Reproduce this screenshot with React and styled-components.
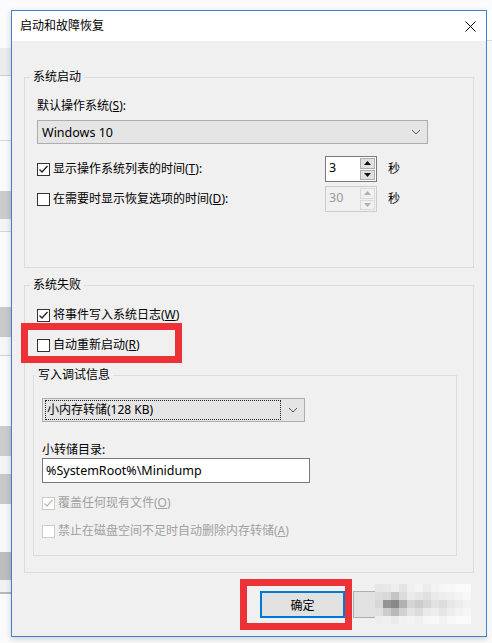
import React from "react";
import styled, { createGlobalStyle } from "styled-components";

const GlobalStyle = createGlobalStyle`
  html, body {
    margin: 0;
    padding: 0;
    background: #fff;
  }
  body {
    font-family: "Noto Sans", "Noto Sans CJK SC", sans-serif;
    font-size: 12px;
    color: #000;
  }
`;

// strips of the window that sits behind the dialog
const leftStrip = [
    { h: 38, c: "#fbfbfb" },
    { h: 27, c: "#ececec" },
    { h: 1, c: "#cfcfcf" },
    { h: 64, c: "#f9f9f9" },
    { h: 1, c: "#d6d6d6" },
    { h: 50, c: "#fafafa" },
    { h: 28, c: "#cbcbcb" },
    { h: 12, c: "#f4f4f4" },
    { h: 1, c: "#d4d4d4" },
    { h: 75, c: "#fafafa" },
    { h: 30, c: "#c9c9c9" },
    { h: 18, c: "#f6f6f6" },
    { h: 1, c: "#d0d0d0" },
    { h: 70, c: "#fafafa" },
    { h: 30, c: "#cccccc" },
    { h: 18, c: "#f4f4f4" },
    { h: 30, c: "#c8c8c8" },
    { h: 48, c: "#f8f8f8" },
    { h: 28, c: "#bdbdbd" },
    { h: 12, c: "#f2f2f2" },
    { h: 2, c: "#b8b8b8" },
    { h: 59, c: "#fafafa" },
];

const mosaic = [
    ["e6", "e8", "ee", "e4", "f0", "f4", "ec", "f2", "f6", "f8", "fa", "fb"],
    ["dc", "d8", "c4", "dc", "ea", "e6", "e0", "ea", "ee", "f0", "f4", "f8"],
    ["d6", "94", "88", "b2", "d4", "cc", "d6", "e2", "dc", "e8", "ec", "f2"],
    ["e0", "cc", "b8", "d2", "e4", "dc", "ea", "ee", "e6", "ee", "f2", "f6"],
    ["ee", "f0", "ea", "f2", "f4", "f0", "f6", "f8", "f2", "f8", "f9", "fa"],
];

function CheckBox({ checked, disabled, children }) {
    return (
        <CheckRow $disabled={disabled}>
            <Box $disabled={disabled}>
                {checked && (
                    <svg width="11" height="11" viewBox="0 0 11 11">
                        <polyline points="1.5,5.5 4,8 9.5,2"
                                  fill="none"
                                  stroke={disabled ? "#bcbcbc" : "#222"}
                                  strokeWidth="1.3" />
                    </svg>
                )}
            </Box>
            <span>{children}</span>
        </CheckRow>
    );
}

function Chevron() {
    return (
        <svg width="10" height="6" viewBox="0 0 10 6">
            <polyline points="1,1 5,5 9,1" fill="none" stroke="#555" strokeWidth="1" />
        </svg>
    );
}

function Arrow({ up, disabled }) {
    const c = disabled ? "#b0b0b0" : "#111";
    return (
        <svg width="7" height="4" viewBox="0 0 7 4">
            <polygon points={up ? "0,4 3.5,0 7,4" : "0,0 3.5,4 7,0"} fill={c} />
        </svg>
    );
}

function Spin({ value, disabled }) {
    return (
        <SpinBox $disabled={disabled}>
            <SpinValue $disabled={disabled}>{value}</SpinValue>
            <SpinButtons>
                <SpinButton $disabled={disabled}><Arrow up disabled={disabled} /></SpinButton>
                <SpinButton $disabled={disabled}><Arrow disabled={disabled} /></SpinButton>
            </SpinButtons>
        </SpinBox>
    );
}

export default function App() {
    return (
        <Screen>
            <GlobalStyle />
            <TopGap />
            <Middle>
                <LeftStrip>
                    {leftStrip.map((s, i) => (
                        <StripPiece key={i} style={{ height: s.h, background: s.c }} />
                    ))}
                </LeftStrip>
                <Window>
                    <TitleBar>
                        <Title>启动和故障恢复</Title>
                        <svg width="11" height="11" viewBox="0 0 11 11">
                            <line x1="0.5" y1="0.5" x2="10.5" y2="10.5" stroke="#000" strokeWidth="1" />
                            <line x1="10.5" y1="0.5" x2="0.5" y2="10.5" stroke="#000" strokeWidth="1" />
                        </svg>
                    </TitleBar>
                    <Body>
                        <Group $top={36} $bottom={55}>
                            <Caption>系统启动</Caption>
                            <FieldLabel $top={13}>默认操作系统(<u>S</u>):</FieldLabel>
                            <Combo $width={391} $top={6}>
                                <ComboText>Windows 10</ComboText>
                                <Chevron />
                            </Combo>
                            <SpinRow $top={12}>
                                <CheckBox checked>显示操作系统列表的时间(<u>T</u>):</CheckBox>
                                <Spin value="3" />
                                <Unit>秒</Unit>
                            </SpinRow>
                            <SpinRow $top={4}>
                                <CheckBox>在需要时显示恢复选项的时间(<u>D</u>):</CheckBox>
                                <Spin value="30" disabled />
                                <Unit>秒</Unit>
                            </SpinRow>
                        </Group>

                        <Group $top={17} $bottom={16}>
                            <Caption>系统失败</Caption>
                            <Spaced $top={14}>
                                <CheckBox checked>将事件写入系统日志(<u>W</u>)</CheckBox>
                            </Spaced>
                            <Highlight $left={-16} $pad="7px 0 3px 9px" $width={161}>
                                <CheckBox>自动重新启动(<u>R</u>)</CheckBox>
                            </Highlight>
                            <SubGroup>
                                <Caption>写入调试信息</Caption>
                                <Combo $width={263} $top={15}>
                                    <FocusText>小内存转储(128 KB)</FocusText>
                                    <Chevron />
                                </Combo>
                                <FieldLabel $top={20}>小转储目录:</FieldLabel>
                                <TextInput>%SystemRoot%\Minidump</TextInput>
                                <Spaced $top={12}>
                                    <CheckBox checked disabled>覆盖任何现有文件(<u>O</u>)</CheckBox>
                                </Spaced>
                                <Spaced $top={12}>
                                    <CheckBox disabled>禁止在磁盘空间不足时自动删除内存转储(<u>A</u>)</CheckBox>
                                </Spaced>
                            </SubGroup>
                        </Group>

                        <ButtonRow>
                            <Highlight $left={0} $pad="5px 0 5px 13px" $width={112}>
                                <DefaultButton>确定</DefaultButton>
                            </Highlight>
                            <CancelWrap>
                                <Button>取消</Button>
                                <Mosaic>
                                    {mosaic.flat().map((g, i) => (
                                        <MosaicCell key={i} style={{ background: `#${g}${g}${g}` }} />
                                    ))}
                                </Mosaic>
                            </CancelWrap>
                        </ButtonRow>
                    </Body>
                </Window>
                <RightStrip>
                    <StripPiece style={{ height: 30, background: "#fdfdfd" }} />
                    <StripPiece style={{ height: 1, background: "#d8d8d8" }} />
                    <StripPiece style={{ height: 596, background: "#f7f7f7" }} />
                </RightStrip>
            </Middle>
        </Screen>
    );
}

// Styled components
const Screen = styled.div`
    width: 492px;
    height: 643px;
    overflow: hidden;
    background: #fbfbfb;
    display: flex;
    flex-direction: column;
`;

const TopGap = styled.div`
    height: 10px;
    flex-shrink: 0;
`;

const Middle = styled.div`
    display: flex;
    align-items: flex-start;
`;

const LeftStrip = styled.div`
    width: 11px;
    flex-shrink: 0;
    display: flex;
    flex-direction: column;
`;

const RightStrip = styled.div`
    flex: 1;
    display: flex;
    flex-direction: column;
`;

const StripPiece = styled.div`
    flex-shrink: 0;
`;

const Window = styled.div`
    width: 476px;
    height: 627px;
    box-sizing: border-box;
    border: 1px solid #3a85d2;
    display: flex;
    flex-direction: column;
    box-shadow: 0 2px 6px rgba(0, 0, 0, 0.18);
    flex-shrink: 0;
`;

const TitleBar = styled.div`
    height: 30px;
    flex-shrink: 0;
    background: #fff;
    display: flex;
    align-items: center;
    justify-content: space-between;
    padding: 0 10px 0 8px;
`;

const Title = styled.div`
    font-size: 12px;
    line-height: 16px;
    color: #000;
`;

const Body = styled.div`
    flex: 1;
    background: #f0f0f0;
    padding: 0 12px;
    display: flex;
    flex-direction: column;
`;

const Group = styled.div`
    margin-top: ${p => p.$top}px;
    border: 1px solid #dcdcdc;
    padding: 0 12px ${p => p.$bottom}px 12px;
    display: flex;
    flex-direction: column;
`;

const SubGroup = styled.div`
    margin: 12px 0 0 -4px;
    width: 424px;
    box-sizing: border-box;
    border: 1px solid #dcdcdc;
    padding: 0 8px 16px 8px;
    display: flex;
    flex-direction: column;
`;

const Caption = styled.div`
    align-self: flex-start;
    margin: -9px 0 0 -7px;
    padding: 0 3px;
    line-height: 16px;
    background: #f0f0f0;
`;

const FieldLabel = styled.div`
    margin-top: ${p => p.$top}px;
    line-height: 16px;
`;

const Combo = styled.div`
    margin-top: ${p => p.$top}px;
    width: ${p => p.$width}px;
    height: 24px;
    box-sizing: border-box;
    border: 1px solid #adadad;
    background: #e5e5e5;
    display: flex;
    align-items: center;
    justify-content: space-between;
    padding: 0 6px 0 3px;
`;

const ComboText = styled.span`
    padding-left: 1px;
    font-size: 12.5px;
`;

const FocusText = styled.span`
    flex: 1;
    margin-right: 8px;
    height: 18px;
    line-height: 18px;
    outline: 1px dotted #222;
    padding-left: 1px;
`;

const SpinRow = styled.div`
    margin-top: ${p => p.$top}px;
    height: 26px;
    display: grid;
    grid-template-columns: 277px 52px auto;
    column-gap: 11px;
    align-items: center;
`;

const CheckRow = styled.div`
    display: flex;
    align-items: center;
    gap: 3px;
    line-height: 16px;
    white-space: nowrap;
    color: ${p => (p.$disabled ? "#a0a0a0" : "#000")};
`;

const Box = styled.div`
    width: 13px;
    height: 13px;
    box-sizing: border-box;
    border: 1px solid ${p => (p.$disabled ? "#cccccc" : "#333")};
    background: #fff;
    display: flex;
    align-items: center;
    justify-content: center;
    flex-shrink: 0;
`;

const Spaced = styled.div`
    margin-top: ${p => p.$top}px;
`;

const Highlight = styled.div`
    align-self: flex-start;
    margin-left: ${p => p.$left}px;
    width: ${p => p.$width}px;
    box-sizing: border-box;
    border: 7px solid #ec3137;
    padding: ${p => p.$pad};
`;

const SpinBox = styled.div`
    height: 26px;
    box-sizing: border-box;
    border: 1px solid ${p => (p.$disabled ? "#cccccc" : "#7a7a7a")};
    background: ${p => (p.$disabled ? "#f0f0f0" : "#fff")};
    display: flex;
`;

const SpinValue = styled.div`
    flex: 1;
    padding-left: 3px;
    line-height: 22px;
    font-size: 12.5px;
    color: ${p => (p.$disabled ? "#9a9a9a" : "#000")};
`;

const SpinButtons = styled.div`
    width: 15px;
    display: flex;
    flex-direction: column;
    gap: 1px;
    padding: 1px 1px 1px 0;
`;

const SpinButton = styled.div`
    flex: 1;
    box-sizing: border-box;
    border: 1px solid ${p => (p.$disabled ? "#dadada" : "#adadad")};
    background: ${p => (p.$disabled ? "#f0f0f0" : "#e1e1e1")};
    display: flex;
    align-items: center;
    justify-content: center;
`;

const Unit = styled.span`
    line-height: 16px;
`;

const TextInput = styled.div`
    width: 268px;
    height: 25px;
    box-sizing: border-box;
    border: 1px solid #7a7a7a;
    background: #fff;
    padding-left: 3px;
    line-height: 23px;
    font-size: 12.5px;
`;

const ButtonRow = styled.div`
    margin-top: 6px;
    padding-left: 216px;
    display: flex;
    align-items: flex-start;
`;

const Button = styled.div`
    width: 85px;
    height: 27px;
    box-sizing: border-box;
    border: 1px solid #adadad;
    background: #e1e1e1;
    display: flex;
    align-items: center;
    justify-content: center;
`;

const DefaultButton = styled(Button)`
    border: 2px solid #0078d7;
`;

const CancelWrap = styled.div`
    position: relative;
    margin: 12px 0 0 1px;
`;

const Mosaic = styled.div`
    position: absolute;
    left: 22px;
    top: -7px;
    display: grid;
    grid-template-columns: repeat(12, 8px);
    grid-auto-rows: 8px;
`;

const MosaicCell = styled.div``;
